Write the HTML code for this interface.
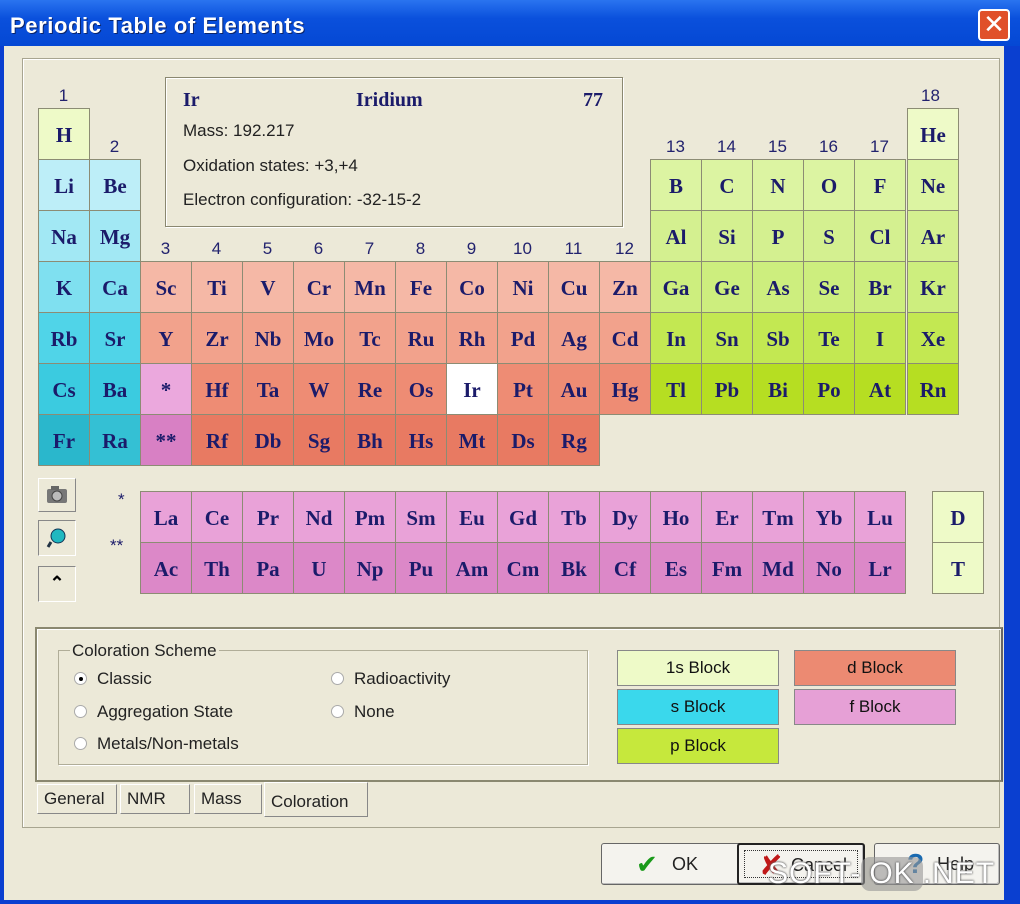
<!DOCTYPE html>
<html><head><meta charset="utf-8"><style>
*{margin:0;padding:0;box-sizing:border-box}
body{width:1020px;height:904px;position:relative;overflow:hidden;background:#0a3fd0;font-family:"Liberation Sans",sans-serif}
.win{position:absolute;left:4px;top:46px;width:1000px;height:854px;background:#ece9d8}
.title{position:absolute;left:0;top:0;width:1020px;height:46px;background:linear-gradient(#2a74f0,#0a50dc 40%,#0548d4);color:#fff;font:bold 22px "Liberation Sans",sans-serif;letter-spacing:0.6px;padding:13px 0 0 10px;text-shadow:1px 1px 0 #0a246a}
.close{position:absolute;left:978px;top:9px;width:32px;height:32px;background:#e0502a;border:2px solid #fff;border-radius:4px;color:#fff;font:26px "Liberation Sans";text-align:center;line-height:27px}
.frame{position:absolute;left:22px;top:58px;width:978px;height:770px;border:1px solid #a8a590;box-shadow:inset 1px 1px 0 #fff}
.c{position:absolute;width:52px;height:52px;border:1px solid #8c8c74;font:bold 21px "Liberation Serif",serif;color:#1b1b6a;text-align:center;line-height:52px}
.g{position:absolute;width:51px;text-align:center;font:17px "Liberation Sans";color:#22226e}
.s2{background:#bdeef8}.s3{background:#a2e8f4}.s4{background:#7fe0f0}.s5{background:#50d4e8}.s6{background:#3bcbe0}.s7{background:#2ab7cc}
.d4{background:#f5b8a6}.d5{background:#f2a28c}.d6{background:#ee8c74}.d7{background:#e87a62}
.p1{background:#eefac8}.p2{background:#dcf4a2}.p3{background:#d4f090}.p4{background:#cdee7e}.p5{background:#c3e852}.p6{background:#b6de22}
.f1{background:#e9a2d8}.f2{background:#dc88c8}
.info{position:absolute;left:165px;top:77px;width:458px;height:150px;border:1px solid #8a8870;box-shadow:1px 1px 0 #fff, inset 1px 1px 0 #fff}
.it{position:absolute;font:17px "Liberation Sans";color:#222}
.tb{position:absolute;left:38px;width:38px;background:#ece9d8;border:1px solid;border-color:#fff #888 #888 #fff}
.lg{position:absolute;height:36px;border:1px solid #888;font:17px "Liberation Sans";text-align:center;line-height:34px;color:#111}
.rad{position:absolute;font:17px "Liberation Sans";color:#222}
.rad i{display:inline-block;width:13px;height:13px;border-radius:50%;background:#fff;border:1px solid #aaa;vertical-align:-1px;margin-right:10px;position:relative}
.btn{position:absolute;top:843px;height:42px;border:1px solid #666;background:#f4f3ee;border-radius:3px;font:18px "Liberation Sans";color:#222;box-shadow:inset -1px -1px 0 #bbb}
.tab{position:absolute;top:784px;height:30px;border:1px solid #888;border-top-color:#fff;border-left-color:#fff;font:17px "Liberation Sans";color:#222;padding:4px 6px}
</style></head><body>
<div class="win"></div>
<div class="title">Periodic Table of Elements</div>
<div class="close">✕</div>
<div class="frame"></div>

<div class="info"></div>
<div class="it" style="left:183px;top:89px;font:bold 20px 'Liberation Serif';color:#1b1b6a">Ir</div>
<div class="it" style="left:356px;top:89px;font:bold 20px 'Liberation Serif';color:#1b1b6a">Iridium</div>
<div class="it" style="left:583px;top:89px;font:bold 20px 'Liberation Serif';color:#1b1b6a">77</div>
<div class="it" style="left:183px;top:121px">Mass: 192.217</div>
<div class="it" style="left:183px;top:156px">Oxidation states: +3,+4</div>
<div class="it" style="left:183px;top:190px">Electron configuration: -32-15-2</div>

<div class="g" style="left:38px;top:86px">1</div>
<div class="g" style="left:89px;top:137px">2</div>
<div class="g" style="left:140px;top:239px">3</div><div class="g" style="left:191px;top:239px">4</div><div class="g" style="left:242px;top:239px">5</div><div class="g" style="left:293px;top:239px">6</div><div class="g" style="left:344px;top:239px">7</div><div class="g" style="left:395px;top:239px">8</div><div class="g" style="left:446px;top:239px">9</div><div class="g" style="left:497px;top:239px">10</div><div class="g" style="left:548px;top:239px">11</div><div class="g" style="left:599px;top:239px">12</div>
<div class="g" style="left:650px;top:137px">13</div><div class="g" style="left:701px;top:137px">14</div><div class="g" style="left:752px;top:137px">15</div><div class="g" style="left:803px;top:137px">16</div><div class="g" style="left:854px;top:137px">17</div><div class="g" style="left:905px;top:86px">18</div>

<div class="c p1" style="left:38px;top:108px">H</div>
<div class="c p1" style="left:907px;top:108px">He</div>
<div class="c s2" style="left:38px;top:159px">Li</div><div class="c s2" style="left:89px;top:159px">Be</div>
<div class="c p2" style="left:650px;top:159px">B</div><div class="c p2" style="left:701px;top:159px">C</div><div class="c p2" style="left:752px;top:159px">N</div><div class="c p2" style="left:803px;top:159px">O</div><div class="c p2" style="left:854px;top:159px">F</div><div class="c p2" style="left:907px;top:159px">Ne</div>
<div class="c s3" style="left:38px;top:210px">Na</div><div class="c s3" style="left:89px;top:210px">Mg</div>
<div class="c p3" style="left:650px;top:210px">Al</div><div class="c p3" style="left:701px;top:210px">Si</div><div class="c p3" style="left:752px;top:210px">P</div><div class="c p3" style="left:803px;top:210px">S</div><div class="c p3" style="left:854px;top:210px">Cl</div><div class="c p3" style="left:907px;top:210px">Ar</div>

<div class="c s4" style="left:38px;top:261px">K</div><div class="c s4" style="left:89px;top:261px">Ca</div>
<div class="c d4" style="left:140px;top:261px">Sc</div><div class="c d4" style="left:191px;top:261px">Ti</div><div class="c d4" style="left:242px;top:261px">V</div><div class="c d4" style="left:293px;top:261px">Cr</div><div class="c d4" style="left:344px;top:261px">Mn</div><div class="c d4" style="left:395px;top:261px">Fe</div><div class="c d4" style="left:446px;top:261px">Co</div><div class="c d4" style="left:497px;top:261px">Ni</div><div class="c d4" style="left:548px;top:261px">Cu</div><div class="c d4" style="left:599px;top:261px">Zn</div>
<div class="c p4" style="left:650px;top:261px">Ga</div><div class="c p4" style="left:701px;top:261px">Ge</div><div class="c p4" style="left:752px;top:261px">As</div><div class="c p4" style="left:803px;top:261px">Se</div><div class="c p4" style="left:854px;top:261px">Br</div><div class="c p4" style="left:907px;top:261px">Kr</div>

<div class="c s5" style="left:38px;top:312px">Rb</div><div class="c s5" style="left:89px;top:312px">Sr</div>
<div class="c d5" style="left:140px;top:312px">Y</div><div class="c d5" style="left:191px;top:312px">Zr</div><div class="c d5" style="left:242px;top:312px">Nb</div><div class="c d5" style="left:293px;top:312px">Mo</div><div class="c d5" style="left:344px;top:312px">Tc</div><div class="c d5" style="left:395px;top:312px">Ru</div><div class="c d5" style="left:446px;top:312px">Rh</div><div class="c d5" style="left:497px;top:312px">Pd</div><div class="c d5" style="left:548px;top:312px">Ag</div><div class="c d5" style="left:599px;top:312px">Cd</div>
<div class="c p5" style="left:650px;top:312px">In</div><div class="c p5" style="left:701px;top:312px">Sn</div><div class="c p5" style="left:752px;top:312px">Sb</div><div class="c p5" style="left:803px;top:312px">Te</div><div class="c p5" style="left:854px;top:312px">I</div><div class="c p5" style="left:907px;top:312px">Xe</div>

<div class="c s6" style="left:38px;top:363px">Cs</div><div class="c s6" style="left:89px;top:363px">Ba</div>
<div class="c f1" style="left:140px;top:363px;background:#eba8dd">*</div><div class="c d6" style="left:191px;top:363px">Hf</div><div class="c d6" style="left:242px;top:363px">Ta</div><div class="c d6" style="left:293px;top:363px">W</div><div class="c d6" style="left:344px;top:363px">Re</div><div class="c d6" style="left:395px;top:363px">Os</div><div class="c" style="left:446px;top:363px;background:#fff">Ir</div><div class="c d6" style="left:497px;top:363px">Pt</div><div class="c d6" style="left:548px;top:363px">Au</div><div class="c d6" style="left:599px;top:363px">Hg</div>
<div class="c p6" style="left:650px;top:363px">Tl</div><div class="c p6" style="left:701px;top:363px">Pb</div><div class="c p6" style="left:752px;top:363px">Bi</div><div class="c p6" style="left:803px;top:363px">Po</div><div class="c p6" style="left:854px;top:363px">At</div><div class="c p6" style="left:907px;top:363px">Rn</div>

<div class="c s7" style="left:38px;top:414px">Fr</div><div class="c s7" style="left:89px;top:414px;background:#34c0d4">Ra</div>
<div class="c f2" style="left:140px;top:414px;background:#d880c4">**</div><div class="c d7" style="left:191px;top:414px">Rf</div><div class="c d7" style="left:242px;top:414px">Db</div><div class="c d7" style="left:293px;top:414px">Sg</div><div class="c d7" style="left:344px;top:414px">Bh</div><div class="c d7" style="left:395px;top:414px">Hs</div><div class="c d7" style="left:446px;top:414px">Mt</div><div class="c d7" style="left:497px;top:414px">Ds</div><div class="c d7" style="left:548px;top:414px">Rg</div>

<div class="it" style="left:118px;top:490px;color:#1b1b6a">*</div>
<div class="it" style="left:110px;top:536px;color:#1b1b6a">**</div>

<div class="c f1" style="left:140px;top:491px">La</div><div class="c f1" style="left:191px;top:491px">Ce</div><div class="c f1" style="left:242px;top:491px">Pr</div><div class="c f1" style="left:293px;top:491px">Nd</div><div class="c f1" style="left:344px;top:491px">Pm</div><div class="c f1" style="left:395px;top:491px">Sm</div><div class="c f1" style="left:446px;top:491px">Eu</div><div class="c f1" style="left:497px;top:491px">Gd</div><div class="c f1" style="left:548px;top:491px">Tb</div><div class="c f1" style="left:599px;top:491px">Dy</div><div class="c f1" style="left:650px;top:491px">Ho</div><div class="c f1" style="left:701px;top:491px">Er</div><div class="c f1" style="left:752px;top:491px">Tm</div><div class="c f1" style="left:803px;top:491px">Yb</div><div class="c f1" style="left:854px;top:491px">Lu</div>
<div class="c f2" style="left:140px;top:542px">Ac</div><div class="c f2" style="left:191px;top:542px">Th</div><div class="c f2" style="left:242px;top:542px">Pa</div><div class="c f2" style="left:293px;top:542px">U</div><div class="c f2" style="left:344px;top:542px">Np</div><div class="c f2" style="left:395px;top:542px">Pu</div><div class="c f2" style="left:446px;top:542px">Am</div><div class="c f2" style="left:497px;top:542px">Cm</div><div class="c f2" style="left:548px;top:542px">Bk</div><div class="c f2" style="left:599px;top:542px">Cf</div><div class="c f2" style="left:650px;top:542px">Es</div><div class="c f2" style="left:701px;top:542px">Fm</div><div class="c f2" style="left:752px;top:542px">Md</div><div class="c f2" style="left:803px;top:542px">No</div><div class="c f2" style="left:854px;top:542px">Lr</div>

<div class="c p1" style="left:932px;top:491px">D</div>
<div class="c p1" style="left:932px;top:542px">T</div>

<div class="tb" style="top:478px;height:34px"><svg width="36" height="32"><rect x="8" y="10" width="20" height="14" rx="2" fill="#777"/><rect x="12" y="7" width="8" height="4" fill="#666"/><circle cx="18" cy="17" r="5" fill="#bbb" stroke="#444"/></svg></div>
<div class="tb" style="top:520px;height:36px;border-color:#888 #fff #fff #888"><svg width="36" height="34"><circle cx="19" cy="15" r="7" fill="#20b8c0" stroke="#135"/><path d="M12 21 l-3 5" stroke="#234" stroke-width="3"/></svg></div>
<div class="tb" style="top:566px;height:36px;border-color:#888 #fff #fff #888;font:bold 18px 'Liberation Sans';text-align:center;line-height:32px">&#8963;</div>

<div style="position:absolute;left:35px;top:627px;width:968px;height:155px;border:2px solid #8a8870;border-right-color:#666;box-shadow:inset 1px 1px 0 #fff"></div>
<div style="position:absolute;left:58px;top:650px;width:530px;height:115px;border:1px solid #b0ad98;box-shadow:1px 1px 0 #fff"></div>
<div class="rad" style="left:70px;top:641px;background:#ece9d8;padding:0 2px">Coloration Scheme</div>
<div class="rad" style="left:74px;top:669px"><i><b style="position:absolute;left:4px;top:4px;width:4px;height:4px;background:#000;border-radius:50%"></b></i>Classic</div>
<div class="rad" style="left:74px;top:702px"><i></i>Aggregation State</div>
<div class="rad" style="left:74px;top:734px"><i></i>Metals/Non-metals</div>
<div class="rad" style="left:331px;top:669px"><i></i>Radioactivity</div>
<div class="rad" style="left:331px;top:702px"><i></i>None</div>

<div class="lg" style="left:617px;top:650px;width:162px;background:#eefac8">1s Block</div>
<div class="lg" style="left:617px;top:689px;width:162px;background:#3ad8ec">s Block</div>
<div class="lg" style="left:617px;top:728px;width:162px;background:#c6e83c">p Block</div>
<div class="lg" style="left:794px;top:650px;width:162px;background:#ec8a72">d Block</div>
<div class="lg" style="left:794px;top:689px;width:162px;background:#e6a0d6">f Block</div>

<div class="tab" style="left:37px;width:80px">General</div>
<div class="tab" style="left:120px;width:70px">NMR</div>
<div class="tab" style="left:194px;width:68px">Mass</div>
<div class="tab" style="left:264px;top:782px;width:104px;height:35px;background:#ece9d8;border-top-color:#fff;padding-top:9px">Coloration</div>

<div class="btn" style="left:601px;width:146px"><span style="position:absolute;left:34px;top:6px;color:#1a9a1a;font:bold 26px 'DejaVu Sans'">✔</span><span style="position:absolute;left:70px;top:10px">OK</span></div>
<div class="btn" style="left:737px;width:128px;border:2px solid #222"><div style="position:absolute;left:5px;top:5px;right:5px;bottom:5px;border:1px dotted #333"></div><span style="position:absolute;left:20px;top:4px;color:#c01818;font:bold 28px 'DejaVu Sans'">✘</span><span style="position:absolute;left:52px;top:10px">Cancel</span></div>
<div class="btn" style="left:874px;width:126px"><span style="position:absolute;left:32px;top:4px;color:#1a6ab0;font:bold 28px 'Liberation Sans'">?</span><span style="position:absolute;left:62px;top:10px">Help</span></div>

<div style="position:absolute;left:768px;top:857px;font:30px 'Liberation Sans';color:#fff;text-shadow:0 0 2px #666,0 0 2px #666;letter-spacing:1px">SOFT-<span style="display:inline-block;background:rgba(150,150,150,.6);border-radius:9px;padding:0 8px">OK</span>.NET</div>
</body></html>
